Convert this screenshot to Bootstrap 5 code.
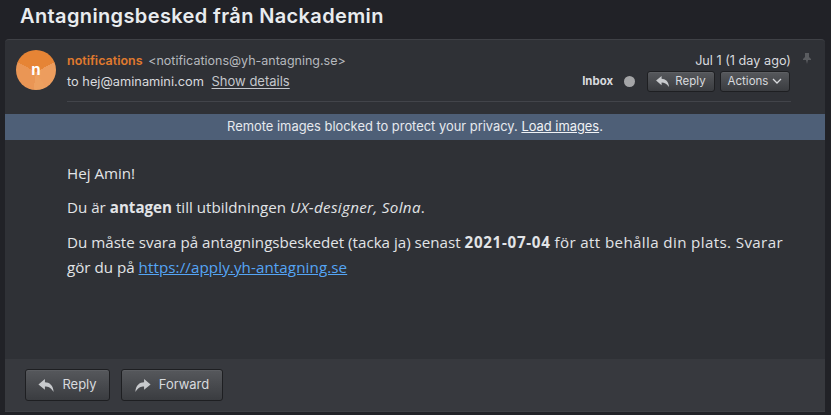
<!DOCTYPE html>
<html lang="en"><head><meta charset="utf-8"><title>Mail</title>
<link href="https://cdn.jsdelivr.net/npm/bootstrap@5.3.0/dist/css/bootstrap.min.css" rel="stylesheet">
<style>
html,body{height:415px;overflow:hidden}
body{background:#212227;font-family:"Inter","Liberation Sans",sans-serif;color:#d6d8dc;font-size:13px}
.subject{font-size:20px;font-weight:600;color:#e9ecef;margin:0;padding:3px 0 0 20px;height:39px;line-height:26px;letter-spacing:.37px}
.mailcard{margin-left:5px;height:373px;background:#2f3136;border-radius:4px 4px 0 0;border-top:1px solid #3f4146;display:flex;flex-direction:column;margin-right:6px}
.mailhead{height:74px;padding:10px 5px 0 11px;gap:11px}
.avatar{width:40px;height:40px;border-radius:50%;background:conic-gradient(from -62deg at 50% 55%,#e68435 0 124deg,#ed9d5e 124deg 210deg,#eda060 210deg 250deg,#ea9655 250deg 360deg);color:#fff;font-weight:700;font-size:15px}
.headmain{flex:1;border-bottom:1px solid #42444a;height:52px;position:relative;margin-right:29px}
.headline{height:21px;line-height:21px;white-space:nowrap}
.sender{color:#e07a2e;font-weight:600;font-size:12.5px}
.addr{color:#b6b9be;font-size:12.5px;margin-left:2px}
.toline{font-size:12.8px;color:#d8dade}
.toline a{color:#c4c7cc;margin-left:4px;text-underline-offset:2px;font-size:13px}
.dateline{font-size:12.7px;color:#d8dade}
.inbox{font-size:11.4px;font-weight:700;color:#d8dade}
.dotmark{width:11px;height:11px;border-radius:50%;background:#a4a5a7;display:inline-block;margin:0 12px 0 11px}
.btnset{margin-right:1px}
.grad{background:linear-gradient(#56585c,#3a3c40);border:1px solid #1e1f22;border-radius:3px;color:#d8dade;box-shadow:inset 0 1px 0 #5d5f63;padding:0}
.grad:hover{color:#d8dade}
.tiny{font-size:11.5px;height:21px;line-height:19px;display:inline-flex;align-items:center;justify-content:center;gap:6px}
.tr1{width:68px}.tr2{width:70px;margin-left:5px;gap:4px}
.blockbar{height:26px;line-height:26px;background:#4e5f77;color:#e6e9ee;text-align:center;font-size:12.9px}
.blockbar a{color:#f0f2f5}
.mailbody{flex:1;padding:20.8px 40px 0 62px;font-family:"Open Sans","Noto Sans",sans-serif;font-size:15.15px;line-height:25px;color:#e2e4e7}
.mailbody p{margin:0 0 9.5px}
.mailbody a{color:#55a5f5;letter-spacing:.1px}
.mailbody em{letter-spacing:.35px}
.datestamp{letter-spacing:.7px}
.widetext{letter-spacing:.37px}
.mailfoot{height:53px;background:#37393e;padding:10px 20px;gap:11px;border-bottom:1px solid #3e4045}
.big{height:32px;font-size:13px;display:inline-flex;align-items:center;justify-content:center;gap:8px}
.pin{position:absolute;right:-20px;top:3px}
.b1{width:85px}.b2{width:102px}
</style></head><body>
<h1 class="subject">Antagningsbesked från Nackademin</h1>
<div class="mailcard">
<div class="mailhead d-flex">
<div class="avatar d-flex align-items-center justify-content-center flex-shrink-0">n</div>
<div class="headmain">
<div class="headline d-flex justify-content-between"><span><span class="sender">notifications</span> <span class="addr">&lt;notifications@yh-antagning.se&gt;</span></span><span class="dateline">Jul 1 (1 day ago)</span></div>
<div class="headline d-flex justify-content-between align-items-center"><span class="toline">to hej@aminamini.com <a href="#">Show details</a></span>
<span class="d-flex align-items-center btnset"><span class="inbox">Inbox</span><span class="dotmark"></span>
<button type="button" class="btn grad tiny tr1"><svg width="13" height="11" viewBox="0 0 14 12"><path fill="#c8cacd" d="M6 0 0 5 6 10V7c3 0 5.500 1 8 5C14 6 10 3 6 3z"/></svg>Reply</button>
<button type="button" class="btn grad tiny tr2">Actions<svg width="10" height="7" viewBox="0 0 10 7"><path fill="none" stroke="#d8dade" stroke-width="1.300" d="M1 1l4 4 4-4"/></svg></button></span></div>
<svg class="pin" width="8" height="11" viewBox="0 0 8 11"><path fill="#5a5c60" d="M2 0h4v4l2 2v1H5l-1 4-1-4H0V6l2-2z"/></svg>
</div></div>
<div class="blockbar">Remote images blocked to protect your privacy. <a href="#">Load images</a>.</div>
<div class="mailbody">
<p>Hej Amin!</p>
<p>Du är <strong>antagen</strong> till utbildningen <em>UX-designer, Solna</em>.</p>
<p>Du måste svara på antagningsbeskedet (tacka ja) senast <strong class="datestamp">2021-07-04</strong> <span class="widetext">för att behålla din plats. Svarar</span> gör du på <a href="#">https://apply.yh-antagning.se</a></p>
</div>
<div class="mailfoot d-flex">
<button type="button" class="btn grad big b1"><svg width="16" height="13" viewBox="0 0 14 12"><path fill="#c8cacd" d="M6 0 0 5 6 10V7c3 0 5.500 1 8 5C14 6 10 3 6 3z"/></svg>Reply</button>
<button type="button" class="btn grad big b2"><svg width="16" height="13" viewBox="0 0 14 12"><path fill="#c8cacd" d="M8 0 14 5 8 10V7c-3 0-5.500 1-8 5C0 6 4 3 8 3z"/></svg>Forward</button>
</div>
</div>
<script src="https://cdn.jsdelivr.net/npm/bootstrap@5.3.0/dist/js/bootstrap.bundle.min.js"></script>
</body></html>
